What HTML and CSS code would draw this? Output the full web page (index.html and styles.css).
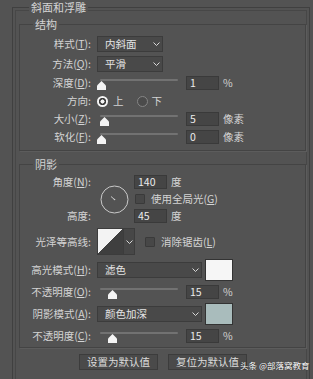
FILE: index.html
```html
<!DOCTYPE html>
<html lang="zh-CN">
<head>
  <meta charset="UTF-8">
  <title>斜面和浮雕</title>
  <link rel="stylesheet" href="styles.css">
</head>
<body>

  <fieldset class="panel">
    <legend>斜面和浮雕</legend>

    <!-- 结构 -->
    <fieldset class="group group-struct">
      <legend>结构</legend>
      <div class="rows">
        <div class="row h16">
          <span class="lbl">样式(<u>T</u>):</span>
          <div class="select sel-short"><span>内斜面</span><svg class="chev" viewBox="0 0 7 4"><polyline points="0.5,0.5 3.5,3.5 6.5,0.5"/></svg></div>
        </div>
        <div class="row h16">
          <span class="lbl">方法(<u>Q</u>):</span>
          <div class="select sel-short"><span>平滑</span><svg class="chev" viewBox="0 0 7 4"><polyline points="0.5,0.5 3.5,3.5 6.5,0.5"/></svg></div>
        </div>
        <div class="row">
          <span class="lbl">深度(<u>D</u>):</span>
          <div class="slider"><div class="track"></div><div class="thumb" style="left:0px"></div></div>
          <span class="num">1</span>
          <span class="unit">%</span>
        </div>
        <div class="row">
          <span class="lbl">方向:</span>
          <span class="radio on"></span><span class="opt">上</span>
          <span class="radio off"></span><span class="opt opt-2">下</span>
        </div>
        <div class="row">
          <span class="lbl">大小(<u>Z</u>):</span>
          <div class="slider"><div class="track"></div><div class="thumb" style="left:3px"></div></div>
          <span class="num">5</span>
          <span class="unit">像素</span>
        </div>
        <div class="row">
          <span class="lbl">软化(<u>F</u>):</span>
          <div class="slider"><div class="track"></div><div class="thumb" style="left:0px"></div></div>
          <span class="num">0</span>
          <span class="unit">像素</span>
        </div>
      </div>
    </fieldset>

    <!-- 阴影 -->
    <fieldset class="group group-shadow">
      <legend>阴影</legend>
      <div class="rows">
        <div class="angle">
          <span class="lbl a1">角度(<u>N</u>):</span>
          <svg class="dial" viewBox="0 0 29 29">
            <circle cx="14.5" cy="14.5" r="13.5"/>
            <line x1="14.5" y1="14.5" x2="11" y2="11.5"/>
            <circle class="dot" cx="14.5" cy="14.5" r="0.8"/>
          </svg>
          <div class="ctl c1"><span class="num">140</span><span class="unit">度</span></div>
          <div class="ctl c2"><span class="check"></span><span class="chk-text">使用全局光(<u>G</u>)</span></div>
          <span class="lbl a3">高度:</span>
          <div class="ctl c3"><span class="num">45</span><span class="unit">度</span></div>
        </div>

        <div class="row h27">
          <span class="lbl">光泽等高线:</span>
          <div class="contour">
            <span class="contour-swatch"></span>
            <span class="contour-arrow"><svg class="chev" viewBox="0 0 7 4"><polyline points="0.5,0.5 3.5,3.5 6.5,0.5"/></svg></span>
          </div>
          <span class="check check-aa"></span><span class="chk-text">消除锯齿(<u>L</u>)</span>
        </div>

        <div class="row h22">
          <span class="lbl">高光模式(<u>H</u>):</span>
          <div class="select sel-long"><span>滤色</span><svg class="chev" viewBox="0 0 7 4"><polyline points="0.5,0.5 3.5,3.5 6.5,0.5"/></svg></div>
          <span class="swatch swatch-hi"></span>
        </div>
        <div class="row">
          <span class="lbl">不透明度(<u>O</u>):</span>
          <div class="slider"><div class="track"></div><div class="thumb" style="left:11px"></div></div>
          <span class="num">15</span>
          <span class="unit">%</span>
        </div>
        <div class="row h22">
          <span class="lbl">阴影模式(<u>A</u>):</span>
          <div class="select sel-long"><span>颜色加深</span><svg class="chev" viewBox="0 0 7 4"><polyline points="0.5,0.5 3.5,3.5 6.5,0.5"/></svg></div>
          <span class="swatch swatch-sh"></span>
        </div>
        <div class="row">
          <span class="lbl">不透明度(<u>C</u>):</span>
          <div class="slider"><div class="track"></div><div class="thumb" style="left:11px"></div></div>
          <span class="num">15</span>
          <span class="unit">%</span>
        </div>
      </div>
    </fieldset>

    <div class="buttons">
      <button class="btn">设置为默认值</button>
      <button class="btn">复位为默认值</button>
    </div>
  </fieldset>

  <div class="watermark">头条 @部落窝教育</div>

</body>
</html>
```

FILE: styles.css
```css
body {
  margin: 0;
  height: 379px;
  overflow: hidden;
  position: relative;
  background-color: #535353;
  color: #d4d4d4;
  font-family: "Noto Sans CJK SC", "Noto Sans", sans-serif;
  font-size: 10.5px;
  line-height: 14px;
}

u {
  text-underline-offset: 1px;
}

/* cadres */
.panel {
  margin: 0 3px 0 12px;
  padding: 0 0 12px 0;
  min-inline-size: 0;
  border: 1px solid #404040;
  box-shadow: inset 0 0 0 2px #535353, inset 0 0 0 3px #474747;
}

.panel > legend {
  margin-left: 16px;
  padding: 0 2px;
  font-size: 11px;
  line-height: 14px;
  background-color: #535353;
}

.group {
  margin: 3px 3px 0 6px;
  padding: 5px 0 6px 0;
  min-inline-size: 0;
  border: 1px solid #444444;
  box-shadow: 1px 1px 0 #5c5c5c;
}

.group > legend {
  margin-left: 13px;
  padding: 0 2px;
  font-size: 11px;
  line-height: 14px;
}

.group-shadow {
  margin-top: 6px;
  padding: 4px 0 4px 0;
}

.rows {
  display: flex;
  flex-direction: column;
  gap: 4px;
}

.row {
  display: flex;
  align-items: center;
  height: 14px;
}

.h16 { height: 16px; }
.h22 { height: 22px; }
.h27 { height: 27px; }

.lbl {
  flex: 0 0 71px;
  width: 71px;
  margin-right: 6px;
  text-align: right;
  white-space: nowrap;
}

/* listes deroulantes */
.select {
  display: flex;
  align-items: center;
  justify-content: space-between;
  box-sizing: border-box;
  height: 16px;
  padding: 0 2px 0 7px;
  background-color: #494949;
  border: 1px solid #3c3c3c;
  color: #e4e4e4;
}

.sel-short { width: 66px; }
.sel-long { width: 105px; }

.chev {
  width: 7px;
  height: 4px;
  fill: none;
  stroke: #d8d8d8;
  stroke-width: 1;
}

/* curseurs */
.slider {
  position: relative;
  flex: 0 0 81px;
  height: 14px;
  margin-right: 8px;
}

.track {
  position: absolute;
  left: 3px;
  right: 0;
  top: 3px;
  height: 2px;
  border-radius: 1px;
  background-color: #727272;
}

.thumb {
  position: absolute;
  top: 5px;
  width: 9px;
  height: 9px;
  background-color: #f4f4f4;
  clip-path: polygon(50% 0, 100% 50%, 100% 100%, 0 100%, 0 50%);
}

.num {
  box-sizing: border-box;
  width: 33px;
  height: 14px;
  padding-left: 3px;
  background-color: #454545;
  border: 1px solid #3a3a3a;
  color: #ececec;
  font-size: 10.5px;
  line-height: 12px;
}

.unit {
  margin-left: 4px;
}

/* boutons radio */
.radio {
  box-sizing: border-box;
  width: 11px;
  height: 11px;
  border-radius: 50%;
}

.radio.on {
  background: radial-gradient(circle, #f4f4f4 0 1.8px, #3b3b3b 2.3px 3.4px, #f4f4f4 3.9px);
}

.radio.off {
  border: 1px solid #858585;
  background-color: #4b4b4b;
  margin-left: 13px;
}

.opt {
  margin-left: 5px;
}

.opt-2 {
  margin-left: 4px;
}

/* angle */
.angle {
  display: grid;
  grid-template-columns: 77px 29px auto;
  grid-template-rows: 14px 14px 14px;
  column-gap: 4px;
  row-gap: 3px;
  margin-bottom: 1px;
}

.a1 { grid-column: 1; grid-row: 1; }
.a3 { grid-column: 1; grid-row: 3; }
.c1 { grid-column: 3; grid-row: 1; }
.c2 { grid-column: 3; grid-row: 2; }
.c3 { grid-column: 3; grid-row: 3; }

.dial {
  grid-column: 2;
  grid-row: 1 / 4;
  align-self: center;
  width: 29px;
  height: 29px;
  margin-left: -1px;
  fill: none;
  stroke: #c9c9c9;
  stroke-width: 1;
}

.dial .dot {
  fill: #d0d0d0;
  stroke: none;
}

.ctl {
  display: flex;
  align-items: center;
}

.check {
  box-sizing: border-box;
  width: 10px;
  height: 10px;
  margin-left: 1px;
  border: 1px solid #3a3a3a;
  border-radius: 1px;
  background-color: #474747;
}

.chk-text {
  margin-left: 6px;
  white-space: nowrap;
}

.check-aa {
  margin-left: 10px;
}

/* courbe */
.contour {
  display: flex;
  height: 27px;
  box-sizing: border-box;
  border: 1px solid #3c3c3c;
}

.contour-swatch {
  width: 25px;
  height: 25px;
  background: linear-gradient(to bottom right, #f3f3f3 50%, #3f3f3f 50%);
}

.contour-arrow {
  display: flex;
  align-items: center;
  justify-content: center;
  width: 10px;
  border-left: 1px solid #3c3c3c;
  background-color: #474747;
}

.swatch {
  box-sizing: border-box;
  width: 28px;
  height: 22px;
  margin-left: 3px;
  border: 1px solid #333333;
}

.swatch-hi { background-color: #f6f6f6; }
.swatch-sh { background-color: #a9bcbc; }

/* boutons */
.buttons {
  display: flex;
  gap: 10px;
  margin: 6px 0 0 66px;
}

.btn {
  box-sizing: border-box;
  width: 79px;
  height: 16px;
  padding: 0;
  background-color: #4a4a4a;
  border: 1px solid #3c3c3c;
  color: #dcdcdc;
  font-family: "Noto Sans CJK SC", sans-serif;
  font-size: 10.5px;
  line-height: 14px;
}

.watermark {
  position: absolute;
  left: 240px;
  top: 359px;
  color: #ffffff;
  font-size: 8.5px;
  line-height: 12px;
  white-space: nowrap;
  text-shadow: 0 0 1px #222222;
}
```
